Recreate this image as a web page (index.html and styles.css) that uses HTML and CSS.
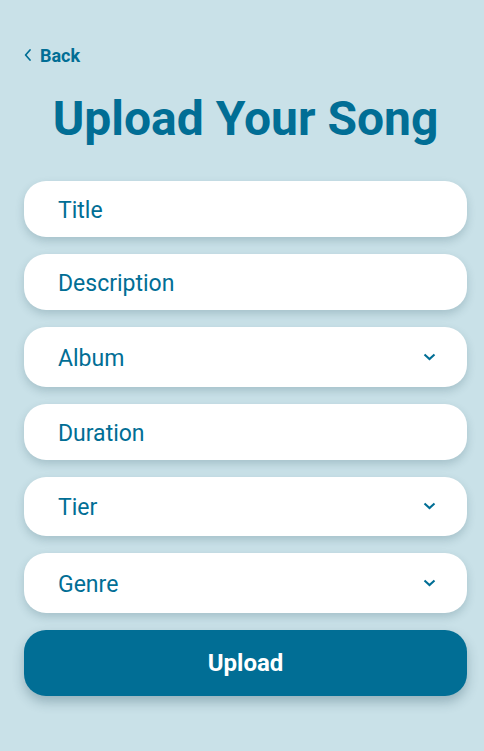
FILE: index.html
```html
<!DOCTYPE html>
<html lang="en">
<head>
<meta charset="utf-8">
<title>Upload Your Song</title>
<link rel="stylesheet" href="styles.css">
</head>
<body>
<main class="page">
  <a class="back" href="#">
    <svg class="back-icon" width="8" height="12" viewBox="0 0 8 12" aria-hidden="true"><path d="M6 1 L1.6 6 L6 11" fill="none" stroke="currentColor" stroke-width="1.7" stroke-linecap="round" stroke-linejoin="round"/></svg>
    <span>Back</span>
  </a>
  <h1 class="heading">Upload Your Song</h1>
  <form class="form">
    <div class="field">Title</div>
    <div class="field">Description</div>
    <div class="field select"><span>Album</span><svg class="chev" width="13" height="8" viewBox="0 0 13 8" aria-hidden="true"><path d="M1.5 1.5 L6.5 6 L11.5 1.5" fill="none" stroke="currentColor" stroke-width="2.1"/></svg></div>
    <div class="field">Duration</div>
    <div class="field select"><span>Tier</span><svg class="chev" width="13" height="8" viewBox="0 0 13 8" aria-hidden="true"><path d="M1.5 1.5 L6.5 6 L11.5 1.5" fill="none" stroke="currentColor" stroke-width="2.1"/></svg></div>
    <div class="field select"><span>Genre</span><svg class="chev" width="13" height="8" viewBox="0 0 13 8" aria-hidden="true"><path d="M1.5 1.5 L6.5 6 L11.5 1.5" fill="none" stroke="currentColor" stroke-width="2.1"/></svg></div>
    <button type="button" class="submit">Upload</button>
  </form>
</main>
</body>
</html>
```

FILE: styles.css
```css
html, body {
  margin: 0;
  padding: 0;
}
body {
  background: #c9e1e8;
  font-family: Roboto, "Liberation Sans", sans-serif;
  color: #016e95;
  min-height: 751px;
}
.page {
  display: flex;
  flex-direction: column;
  padding: 45px 17px 0 24px;
}
.back {
  display: flex;
  align-items: center;
  gap: 8px;
  color: #016e95;
  text-decoration: none;
  font-weight: 700;
  font-size: 18px;
  line-height: 21px;
  align-self: flex-start;
}
.back-icon {
  display: block;
  margin-top: -1px;
}
.heading {
  margin: 25px 0 0;
  text-align: center;
  font-size: 48px;
  line-height: 56px;
  font-weight: 700;
  color: #016e95;
}
.form {
  display: flex;
  flex-direction: column;
  gap: 17px;
  margin-top: 34px;
}
.field {
  background: #ffffff;
  border-radius: 22px;
  height: 56px;
  box-sizing: border-box;
  padding: 3px 31px 0 34px;
  display: flex;
  align-items: center;
  justify-content: space-between;
  font-size: 23px;
  line-height: 27px;
  color: #016e95;
  box-shadow: 0 4px 9px rgba(40, 80, 95, 0.22);
}
.field.select {
  height: 59.5px;
}
.chev {
  display: block;
  color: #016e95;
  margin-top: -3px;
}
.submit {
  height: 66px;
  border: none;
  border-radius: 22px;
  background: #016e95;
  color: #ffffff;
  font-family: Roboto, "Liberation Sans", sans-serif;
  font-weight: 700;
  font-size: 24px;
  box-shadow: 0 6px 12px rgba(30, 70, 85, 0.3);
  cursor: pointer;
}
```
